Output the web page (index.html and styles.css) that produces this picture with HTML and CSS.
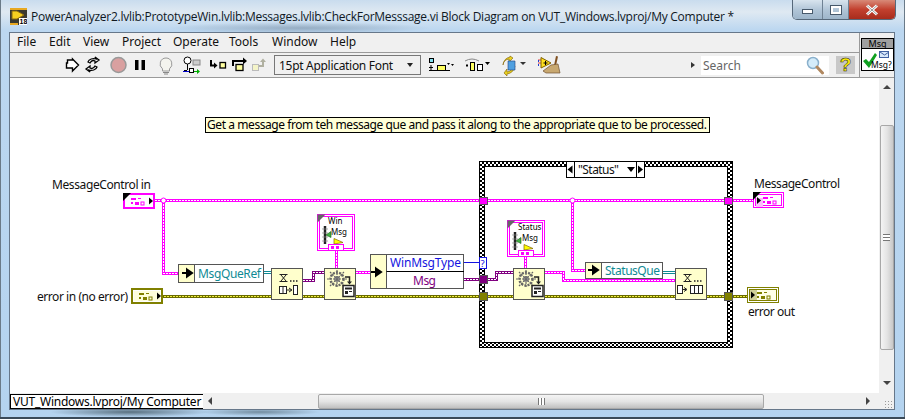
FILE: index.html
```html
<!DOCTYPE html>
<html lang="en">
<head>
  <meta charset="utf-8">
  <meta name="viewport" content="width=device-width, initial-scale=1.0">
  <title>CheckForMesssage.vi Block Diagram</title>
  <link rel="stylesheet" href="styles.css">
</head>
<body>
  <div class="titlebar">
    <svg class="app-icon" width="17" height="17" viewBox="0 0 17 17">
      <rect width="17" height="17" fill="#3a3a30"/>
      <rect x="0" y="0" width="17" height="2" fill="#e8a820"/>
      <rect x="0" y="15" width="8" height="2" fill="#e8a820"/>
      <path d="M2 3h5l7 4-7 4H2z" fill="#f5d020" stroke="#8a6a10"/>
      <rect x="9" y="10" width="8" height="7" fill="#fff"/>
      <text x="9.5" y="16.4" class="icon-num">18</text>
    </svg>
    <span class="title-text">PowerAnalyzer2.lvlib:PrototypeWin.lvlib:Messages.lvlib:CheckForMesssage.vi Block Diagram on VUT_Windows.lvproj/My Computer *</span>
    <div class="win-btns">
      <div class="win-btn btn-min"><i></i></div>
      <div class="win-btn btn-max"><i></i></div>
      <div class="win-btn btn-close">
        <svg width="14" height="12" viewBox="0 0 14 12"><path d="M2 1.5l10 9M12 1.5l-10 9" stroke="#fff" stroke-width="3"/><path d="M2 1.5l10 9M12 1.5l-10 9" stroke="#555" stroke-width=".6"/></svg>
      </div>
    </div>
  </div>

  <div class="window">
    <div class="top">
      <div class="bars">
        <div class="menubar">
          <span class="m-file">File</span>
          <span class="m-edit">Edit</span>
          <span class="m-view">View</span>
          <span class="m-project">Project</span>
          <span class="m-operate">Operate</span>
          <span class="m-tools">Tools</span>
          <span class="m-window">Window</span>
          <span>Help</span>
        </div>
        <div class="toolbar">
          <!-- run / pause / step buttons -->
          <svg class="strip-run" width="210" height="24" viewBox="60 53 210 24">
            <path d="M67.5 60.5v3h-1v5h1v0h5v3l6-6-6-6v1z" transform="translate(0,-.5)" fill="#fff" stroke="#000" stroke-width="1.4"/>
            <path d="M88 62c1-3 5-4 8-3l-1-2 4 3-4 3 0-2c-2-1-4 0-5 2zM97 67c-1 3-5 4-8 3l1 2-4-3 4-3 0 2c2 1 4 0 5-2z" fill="#fff" stroke="#000" stroke-width="1.3"/>
            <circle cx="118.5" cy="65" r="7.5" fill="#d9a0a0" stroke="#999" stroke-width="1.5"/>
            <rect x="135" y="60" width="3.5" height="10" fill="#000"/>
            <rect x="141.5" y="60" width="3.5" height="10" fill="#000"/>
            <path d="M166 58a6 6 0 0 1 3.5 10.800v2.200h-7v-2.200a6 6 0 0 1 3.500-10.800z" fill="#f4f4ee" stroke="#999"/>
            <path d="M163 72.500h6M164 74h4" stroke="#888"/>
            <circle cx="187.500" cy="60.500" r="3.500" fill="#fff" stroke="#000"/>
            <path d="M187.500 64v6M184 70.500h3" stroke="#000"/>
            <rect x="193" y="60" width="7" height="5" fill="#ccc" stroke="#888"/>
            <path d="M183 71.500h7" stroke="#0000d0"/>
            <rect x="189.500" y="68.500" width="4" height="4" fill="#fff" stroke="#000"/>
            <path d="M194 71h3v-2l3 2.500-3 2.500v-2h-3z" fill="#00b000"/>
            <path d="M211 60v5.500h4" fill="none" stroke="#000" stroke-width="2"/>
            <path d="M214 62.500l3.500 3-3.500 3z" fill="#000"/>
            <rect x="220" y="62.500" width="5.500" height="5.500" fill="#ffffa0" stroke="#000" stroke-width="1.300"/>
            <path d="M233 66v-5h11" fill="none" stroke="#000" stroke-width="2"/>
            <path d="M243 57.500l4 3.500-4 3.500z" fill="#000"/>
            <rect x="236" y="64.500" width="7" height="6" fill="#ffffa0" stroke="#000" stroke-width="1.300"/>
            <rect x="252.500" y="64.500" width="6" height="6" fill="#f4f4c8" stroke="#bbb"/>
            <path d="M259 66h4v-5" fill="none" stroke="#b0b0a0" stroke-width="2"/>
            <path d="M260 62l3-3.500 3 3.500z" fill="#b0b0a0"/>
          </svg>
          <div class="font-ring"><span>15pt Application Font</span><i class="caret"></i></div>
          <!-- align / distribute / resize buttons -->
          <svg class="strip-align" width="140" height="24" viewBox="425 53 140 24">
            <rect x="429.500" y="58.500" width="4" height="4" fill="#80e0f0" stroke="#000"/>
            <path d="M429 67.500h4M431 65v5M429 70.500h21" stroke="#000"/>
            <rect x="437.500" y="65.500" width="8" height="5" fill="#ffff60" stroke="#000"/>
            <path d="M447 63l3 0-1.500 2z M451 64h3l-1.500 2z" fill="#000"/>
            <path d="M465 61q7-4 14 0" fill="none" stroke="#888"/>
            <rect x="466" y="64.500" width="2" height="2" fill="#000"/>
            <rect x="470.500" y="62.500" width="4" height="8" fill="#ffff60" stroke="#000"/>
            <rect x="477.500" y="64.500" width="5" height="6" fill="#fff" stroke="#000"/>
            <path d="M485 62h5l-2.500 3z" fill="#000"/>
            <path d="M503 65a7 7 0 0 1 6-6v3l4-4-3-2v1a9 9 0 0 0-7 8z" fill="#e8d020" stroke="#806000" stroke-width=".6"/>
            <path d="M513 66a7 7 0 0 1-6 6v-3l-3 4 3 3v-2a9 9 0 0 0 8-8z" fill="#e8d020" stroke="#806000" stroke-width=".6"/>
            <path d="M508 61h7v9h-7z" fill="#50a0e0" stroke="#204080" stroke-width=".6"/>
            <path d="M520 62h6l-3 3z" fill="#333"/>
            <path d="M538 60h6M538 63h6" stroke="#e04040"/>
            <path d="M538 61h1M538 65h1" stroke="#2040d0" stroke-width="2"/>
            <path d="M541 57.500l10 5.500-10 5z" fill="#ffe020" stroke="#806000"/>
            <path d="M543.500 63h4M545.500 61v4" stroke="#000"/>
            <path d="M556 56l2 .5-2 9h-2z" fill="#805020"/>
            <path d="M543 71l8-6 7-1 2 9-14 0z" fill="#c8a870" stroke="#705030" stroke-width=".7"/>
          </svg>
          <i class="run-arrow"></i>
          <div class="search"><span>Search</span>
            <svg width="18" height="19" viewBox="0 0 18 19">
              <circle cx="7" cy="7" r="5.500" fill="#d4ecfa" stroke="#8ab0cc" stroke-width="1.500"/>
              <path d="M11 11l5.500 6" stroke="#b08860" stroke-width="3" stroke-linecap="round"/>
            </svg>
          </div>
          <div class="help-btn">?</div>
        </div>
      </div>
      <div class="conpane-cell">
        <div class="conpane">
          <div class="con-head">Msg</div>
          <div class="con-body">
            <svg width="30" height="21" viewBox="0 0 30 21">
              <path d="M1 12l3-2 3 3 6-9 2 2-8 13z" fill="#10a020"/>
              <rect x="17.500" y="2.500" width="9" height="6" fill="#d8e8fa" stroke="#4060a0"/>
              <path d="M18 3l4.500 3 4.500-3" fill="none" stroke="#4060a0"/>
              <text x="9" y="19" class="con-text">Msg?</text>
            </svg>
          </div>
        </div>
      </div>
    </div>

    <div class="middle">
      <div class="diagram">
        <svg class="bd" width="869" height="315" viewBox="10 78 869 315">
          <defs>
            <pattern id="checker" width="4" height="4" patternUnits="userSpaceOnUse">
              <rect width="4" height="4" fill="#fff"/>
              <rect width="2" height="2" fill="#000"/>
              <rect x="2" y="2" width="2" height="2" fill="#000"/>
            </pattern>
            <!-- cluster glyph inside control and indicator terminals -->
            <g id="cluster">
              <rect x="0" y="0" width="5" height="2"/>
              <rect x="7" y="0" width="3" height="1"/>
              <rect x="0" y="4" width="2" height="2"/>
              <rect x="4" y="4" width="4" height="3"/>
              <rect x="10" y="4" width="3" height="3" fill="none" stroke="currentColor" stroke-width="1"/>
            </g>
            <g id="sub-arrow"><path d="M0 5h8M5 1.500l5 3.500-5 3.500z" fill="#000" stroke="#000" stroke-width="2"/></g>
            <!-- typedef constant, drawn at 0,0 -->
            <g id="typedef">
              <rect x=".5" y=".5" width="37" height="36" fill="#fff" stroke="#f0f"/>
              <rect x="2.500" y="2.500" width="33" height="32" fill="#fff" stroke="#f0f"/>
              <path d="M.5 .5h8l-8 8z" fill="#666"/>
              <path d="M6 12h4v18H6z" fill="#ccc"/>
              <path d="M7 12h2v18H7z" fill="#222"/>
              <path d="M5 15h6M5 19h6M5 23h6M5 27h6" stroke="#888" stroke-width=".7"/>
              <path d="M9 21l5-3.500v6z" fill="#40b040" stroke="#106010" stroke-width=".6"/>
              <path d="M17 24.500l9 4-9 1.500z" fill="#ff0" stroke="#806000" stroke-width=".7"/>
              <path d="M13 31h8" stroke="#e02020"/>
              <rect x="11.500" y="30.500" width="15" height="6" fill="#fff" stroke="#f0f"/>
              <rect x="14" y="32" width="3" height="3" fill="#f0f"/>
              <rect x="19" y="32" width="3" height="3" fill="#f0f"/>
            </g>
            <!-- dequeue and enqueue nodes -->
            <g id="hourglass">
              <path d="M8.500 6.500h8M8.500 13.500h8M10 7l5 6M15 7l-5 6" stroke="#222" fill="none"/>
              <path d="M19 13h1.500M22 13h1.500M25 13h1.500" stroke="#222" stroke-width="1.500"/>
            </g>
            <g id="gear-node">
              <rect x=".5" y=".5" width="31" height="31" fill="#ffffcc" stroke="#555"/>
              <circle cx="13" cy="11" r="6.500" fill="none" stroke="#666" stroke-width="2.500" stroke-dasharray="2 1.200"/>
              <circle cx="13" cy="11" r="3" fill="#888"/>
              <path d="M3 11h20M13 2v18M6 4l14 14M20 4L6 18" stroke="#666" stroke-width="1.200" stroke-dasharray="2 1"/>
              <path d="M21 9h4.500v5" fill="none" stroke="#222" stroke-width="1.500"/>
              <path d="M23 13.500h5l-2.500 3z" fill="#222"/>
              <rect x="19" y="17.500" width="11" height="11" fill="#fff" stroke="#222" stroke-width="1.500"/>
              <rect x="21" y="19.500" width="7" height="2" fill="#222"/>
              <rect x="21" y="23" width="3" height="3" fill="#222"/>
              <rect x="25" y="23" width="3" height="1" fill="#222"/>
            </g>
          </defs>

          <!-- wires run below the structure and nodes -->
          <g class="wires">
            <path class="w pink" d="M155 200.500H753M163.500 200.500V273.500H178M572.500 200.500V270.500H585M336.500 251V268M525.500 257V268M356 272.500H370M545 272.500H563.500V280.500H675"/>
            <path class="d white" d="M155 200.500H753M163.500 200.500V273.500H178M572.500 200.500V270.500H585M336.500 251V268M525.500 257V268M356 272.500H370M545 272.500H563.500V280.500H675"/>
            <path class="w purple" d="M303 280.500H313.500V272.500H324M464 279.500H480M488 279.500H496.500V272.500H513"/>
            <path class="d white" d="M303 280.500H313.500V272.500H324M464 279.500H480M488 279.500H496.500V272.500H513"/>
            <path class="w olive" d="M161 296.500H748"/>
            <path class="d yellow" d="M161 296.500H748"/>
            <path class="w teal" d="M264 272.500H271M663 272.500H675"/>
            <path class="thin-white" d="M264 272.500H271M663 272.500H675"/>
            <path class="blue" d="M464 262.500H480"/>
          </g>
          <circle cx="163.500" cy="200.500" r="2.500" fill="#fff" stroke="#f0f"/>
          <circle cx="572.500" cy="200.500" r="2.500" fill="#fff" stroke="#f0f"/>

          <!-- comment -->
          <rect x="205.500" y="117.500" width="504" height="15" class="comment-box"/>
          <text x="207" y="129" class="lbl comment" textLength="500">Get a message from teh message que and pass it along to the appropriate que to be processed.</text>

          <!-- front panel terminals -->
          <text x="52" y="189" class="lbl" textLength="99">MessageControl in</text>
          <g transform="translate(123,193)">
            <rect x="1" y="1" width="30" height="14" fill="#fff" stroke="#f0f" stroke-width="2"/>
            <path d="M0 0h8l-8 8z" fill="#000"/>
            <use href="#cluster" x="8" y="5" fill="#f0f" color="#f0f"/>
            <path d="M26 4.500l4 3.500-4 3.500z" fill="#000"/>
          </g>
          <text x="37" y="301" class="lbl" textLength="91">error in (no error)</text>
          <g transform="translate(131,288)">
            <rect x="1" y="1" width="30" height="14" fill="#fff" stroke="#808000" stroke-width="2"/>
            <rect x="3" y="3" width="26" height="10" fill="#ffffdc"/>
            <use href="#cluster" x="8" y="5" fill="#808000" color="#808000"/>
            <path d="M26 4.500l4 3.500-4 3.500z" fill="#000"/>
          </g>
          <text x="754" y="188" class="lbl" textLength="86">MessageControl</text>
          <g transform="translate(753,192)">
            <rect x=".5" y=".5" width="30" height="15" fill="#fff" stroke="#f0f"/>
            <rect x="2.500" y="2.500" width="26" height="11" fill="#fff" stroke="#f0f"/>
            <path d="M0 0h8l-8 8z" fill="#000"/>
            <rect x="3" y="6" width="7" height="9" fill="#fbc0fb"/>
            <use href="#cluster" x="10" y="5" fill="#f0f" color="#f0f"/>
            <path d="M4 5l4 3.500-4 3.500z" fill="#000"/>
          </g>
          <g transform="translate(747,287)">
            <rect x=".5" y=".5" width="31" height="15" fill="#fff" stroke="#808000"/>
            <rect x="2.500" y="2.500" width="27" height="11" fill="#ffffe8" stroke="#808000"/>
            <rect x="3" y="3" width="7" height="10" fill="#cfcf9a"/>
            <use href="#cluster" x="10" y="5" fill="#808000" color="#808000"/>
            <path d="M4 4.500l4 3.500-4 3.500z" fill="#000"/>
          </g>
          <text x="748" y="316" class="lbl" textLength="47">error out</text>

          <!-- unbundle MsgQueRef -->
          <rect x="178.500" y="264.500" width="85" height="18" class="node-white"/>
          <rect x="178.500" y="264.500" width="16" height="18" class="node-beige"/>
          <use href="#sub-arrow" x="182" y="268"/>
          <text x="198" y="278" class="lbl teal-text" textLength="63">MsgQueRef</text>

          <!-- dequeue -->
          <g transform="translate(271,268)">
            <rect x=".5" y=".5" width="31" height="31" fill="#ffffcc" stroke="#555"/>
            <use href="#hourglass"/>
            <rect x="8.500" y="18.500" width="7" height="7" fill="#fff" stroke="#222"/>
            <path d="M12 18.500v7" stroke="#222"/>
            <path d="M16 22h4M18 20l3 2-3 2" fill="none" stroke="#222"/>
            <rect x="22.500" y="17.500" width="4" height="9" fill="#fff" stroke="#222"/>
          </g>

          <use href="#gear-node" x="324" y="268"/>
          <use href="#typedef" x="317" y="214"/>
          <text x="328" y="224" class="small">Win</text>
          <text x="331" y="235" class="small">Msg</text>

          <!-- unbundle WinMsgType / Msg -->
          <rect x="370.500" y="254.500" width="93" height="34" class="node-white"/>
          <rect x="370.500" y="254.500" width="16" height="34" class="node-beige"/>
          <path d="M386.500 271.500H464" stroke="#000"/>
          <use href="#sub-arrow" x="371" y="267"/>
          <text x="390" y="267" class="lbl blue-text" textLength="71">WinMsgType</text>
          <text x="413" y="285" class="lbl purple-text" textLength="23">Msg</text>

          <!-- case structure -->
          <rect x="482" y="164" width="248" height="181" class="case" />
          <rect x="479.500" y="161.500" width="253" height="186" class="case-line"/>
          <rect x="484.500" y="166.500" width="243" height="176" class="case-line"/>
          <rect x="566.500" y="161.500" width="78" height="16" class="sel"/>
          <path d="M574.500 161.500v16M636.500 161.500v16" stroke="#000"/>
          <path d="M572.500 165.500v8l-5-4zM638 165.500v8l5-4z" fill="#000"/>
          <text x="578" y="174" class="lbl" textLength="41">"Status"</text>
          <path d="M627 167h8l-4 5z" fill="#000"/>

          <!-- case tunnels -->
          <rect x="479.500" y="197.500" width="8" height="7" class="tun" fill="#f0f"/>
          <rect x="724.500" y="197.500" width="8" height="7" class="tun" fill="#f0f"/>
          <rect x="479.500" y="275.500" width="8" height="8" class="tun" fill="#800080"/>
          <rect x="479.500" y="292.500" width="8" height="8" class="tun" fill="#808000"/>
          <rect x="724.500" y="292.500" width="8" height="8" class="tun" fill="#808000"/>
          <rect x="479.500" y="257.500" width="7" height="11" class="sel-term"/>
          <text x="480.500" y="266.500" class="q-mark">?</text>

          <use href="#typedef" x="507" y="220"/>
          <text x="518" y="230" class="small">Status</text>
          <text x="522" y="241" class="small">Msg</text>
          <use href="#gear-node" x="513" y="268"/>

          <!-- unbundle StatusQue -->
          <rect x="585.500" y="262.500" width="77" height="16" class="node-white"/>
          <rect x="585.500" y="262.500" width="16" height="16" class="node-beige"/>
          <use href="#sub-arrow" x="588" y="265"/>
          <text x="605" y="275" class="lbl teal-text" textLength="55">StatusQue</text>

          <!-- enqueue -->
          <g transform="translate(675,268)">
            <rect x=".5" y=".5" width="31" height="31" fill="#ffffcc" stroke="#555"/>
            <use href="#hourglass"/>
            <rect x="2.500" y="17.500" width="5" height="8" fill="#fff" stroke="#222"/>
            <path d="M8 21.500h3M9 19.500l3 2-3 2" fill="none" stroke="#222"/>
            <rect x="15.500" y="17.500" width="12" height="8" fill="#fff" stroke="#222"/>
            <path d="M19.500 17.500v8M23.500 17.500v8" stroke="#222"/>
          </g>
        </svg>
      </div>
      <div class="vscroll">
        <i class="arrow-up"></i>
        <div class="vthumb"><b></b></div>
        <i class="arrow-down"></i>
      </div>
    </div>

    <div class="bottom">
      <div class="context">VUT_Windows.lvproj/My Computer</div>
      <i class="arrow-left"></i>
      <div class="hthumb"><b></b></div>
      <i class="arrow-right"></i>
      <div class="grip"></div>
    </div>
  </div>
</body>
</html>
```

FILE: styles.css
```css
html, body { margin: 0; padding: 0; }
body {
  width: 905px; height: 419px;
  overflow: hidden;
  box-sizing: border-box;
  padding: 0 10px 0 9px;
  font-family: "Noto Sans", sans-serif;
  background:
    radial-gradient(ellipse 130px 6px at 300px 28px, rgba(70,90,110,.35), transparent),
    radial-gradient(ellipse 80px 5px at 130px 412px, rgba(50,70,80,.7), transparent),
    radial-gradient(ellipse 60px 4px at 260px 412px, rgba(50,70,80,.5), transparent),
    linear-gradient(180deg, #c9dcee 0, #dfe9f2 12px, #bcd7f0 30px, #b4d3ef 100%);
  box-shadow: inset 0 -2px 0 #3a4a58, inset 1px 0 0 #6a7a88, inset -1px 0 0 #6a7a88;
}

/* Title bar */
.titlebar {
  height: 32px;
  display: flex;
  color: #10181f;
}
.app-icon { margin: 8px 0 0 1px; }
.icon-num { font: bold 7px "Liberation Sans", sans-serif; fill: #000; }
.title-text {
  margin: 8px 0 0 4px;
  font: 12px/17px "Open Sans", sans-serif;
  letter-spacing: -.26px;
  white-space: nowrap;
  flex: none;
}
.win-btns {
  margin-left: auto;
  display: flex;
  height: 20px;
  margin-right: -1px;
  border: 1px solid #56687a;
  border-top: none;
  border-radius: 0 0 5px 5px;
  overflow: hidden;
  box-sizing: border-box;
}
.win-btn {
  display: flex; align-items: center; justify-content: center;
  background: linear-gradient(180deg, #d8e4ee, #b2c6d8 50%, #9db5ca);
  border-right: 1px solid #6f8294;
}
.btn-min { width: 29px; }
.btn-max { width: 25px; }
.btn-close {
  width: 46px; border: none;
  background: linear-gradient(180deg, #d88a78, #c2402e 50%, #a82c1c);
}
.btn-min i { width: 9px; height: 3px; margin-top: 4px; background: #fff; border: 1px solid #47596b; }
.btn-max i { width: 6px; height: 4px; border: 2px solid #fff; outline: 1px solid #47596b; }

/* Window body */
.window {
  height: 376px;
  background: #f0f0f0;
  border: 1px solid #66778a;
  display: flex; flex-direction: column;
}
.top { display: flex; height: 44px; flex: none; border-bottom: 1px solid #9a9a9a; }
.bars { width: 850px; }
.menubar {
  height: 19px;
  border-bottom: 1px solid #9a9a9a;
  display: flex;
  padding-left: 7px;
  font: 12px/17px "Noto Sans", sans-serif;
  color: #111;
}
.m-file { width: 32px; }
.m-edit { width: 34px; }
.m-view { width: 39px; }
.m-project { width: 51px; }
.m-operate { width: 56px; }
.m-tools { width: 43px; }
.m-window { width: 58px; }

.toolbar { height: 24px; display: flex; align-items: center; }
.strip-run { margin-left: 50px; flex: none; }
.font-ring {
  box-sizing: border-box;
  width: 147px; height: 20px;
  margin-left: 4px;
  padding-left: 4px;
  display: flex; align-items: center; justify-content: space-between;
  border: 1px solid #777;
  font: 12px "Noto Sans", sans-serif;
  letter-spacing: -.3px;
  color: #111;
}
.caret {
  width: 0; height: 0; margin-right: 7px;
  border: 3px solid transparent; border-top: 4px solid #222; border-bottom: none;
}
.strip-align { margin-left: 4px; flex: none; }
.run-arrow {
  width: 0; height: 0;
  margin-left: 126px;
  border: 3px solid transparent; border-left: 4px solid #333; border-right: none;
}
.search {
  box-sizing: border-box;
  width: 128px; height: 19px;
  margin-left: 6px;
  padding: 0 5px 0 2px;
  background: #fff;
  display: flex; align-items: center; justify-content: space-between;
  font: 12px "Noto Sans", sans-serif;
  color: #666;
}
.help-btn {
  width: 19px; height: 18px;
  margin-left: 7px;
  background: #c8c8c8;
  text-align: center;
  font: bold 19px/18px "Liberation Sans", sans-serif;
  color: #ffee00;
  -webkit-text-stroke: .5px #222;
}
.conpane-cell { flex: 1; border-left: 1px solid #9a9a9a; padding: 5px 0 0 1px; }
.conpane {
  width: 31px; height: 31px;
  border: 1px solid #000;
  background: #fff;
}
.con-head {
  height: 9px;
  background: #a0a0a0;
  border-bottom: 1px solid #000;
  text-align: center;
  font: 9px/9px "Noto Sans", sans-serif;
  color: #000;
}
.con-body svg { display: block; }
.con-text { font: 8.5px "Noto Sans", sans-serif; fill: #000; }

/* Block diagram */
.middle { height: 315px; flex: none; display: flex; background: #fff; }
.diagram { width: 869px; overflow: hidden; }
.bd { display: block; }
.lbl { font: 12px "Noto Sans", sans-serif; fill: #111; }
.comment { fill: #000; }
.comment-box { fill: #ffffd8; stroke: #000; }
.small { font: 8px "Noto Sans", sans-serif; fill: #000; }
.teal-text { fill: #0f8a94; }
.blue-text { fill: #1414e0; }
.purple-text { fill: #800080; }
.q-mark { font: 9.5px "Noto Sans", sans-serif; fill: #1414e0; }
.node-white { fill: #fff; stroke: #555; }
.node-beige { fill: #ffffcc; stroke: #555; }
.sel { fill: #fff; stroke: #000; }
.sel-term { fill: #fff; stroke: #1414e0; }
.case { fill: none; stroke: url(#checker); stroke-width: 5; shape-rendering: crispEdges; }
.case-line { fill: none; stroke: #000; shape-rendering: crispEdges; }
.tun { stroke: #555; }
.wires path { fill: none; shape-rendering: crispEdges; }
.w { stroke-width: 3; }
.d { stroke-width: 1; stroke-dasharray: 2 1; }
.pink { stroke: #f0f; }
.purple { stroke: #800080; }
.olive { stroke: #6b6b00; }
.teal { stroke: #0f8a94; }
.white { stroke: #fff; }
.yellow { stroke: #f0f040; }
.thin-white { stroke: #fff; stroke-width: 1; }
.blue { stroke: #1414e0; stroke-width: 1; }

/* Scroll bars */
.vscroll {
  flex: 1;
  display: flex; flex-direction: column; align-items: center;
  background: #f0f0f0;
}
.arrow-up {
  width: 0; height: 0; margin-top: 7px;
  border: 4px solid transparent; border-bottom: 4px solid #444; border-top: none;
}
.vthumb {
  box-sizing: border-box;
  width: 14px; height: 225px; margin-top: 36px;
  border: 1px solid #a8a8a8;
  border-radius: 2px;
  background: linear-gradient(90deg, #f4f4f4, #e4e4e4 50%, #c8c8c8);
  display: flex; align-items: center; justify-content: center;
}
.vthumb b { width: 7px; height: 5px; border-top: 1px solid #777; border-bottom: 1px solid #777; background: linear-gradient(#fff 40%, #777 40%, #777 60%, #fff 60%); }
.arrow-down {
  width: 0; height: 0; margin-top: 31px;
  border: 4px solid transparent; border-top: 4px solid #444; border-bottom: none;
}
.bottom {
  flex: 1;
  display: flex; align-items: center;
}
.context {
  box-sizing: border-box;
  width: 193px; height: 15px;
  background: #fff;
  border: 1px solid #000;
  border-right: none;
  padding-left: 2px;
  font: 12px/13px "Noto Sans", sans-serif;
  letter-spacing: -.25px;
  white-space: nowrap;
  color: #000;
}
.arrow-left {
  width: 0; height: 0; margin-left: 5px;
  border: 4px solid transparent; border-right: 4px solid #444; border-left: none;
}
.hthumb {
  box-sizing: border-box;
  width: 446px; height: 15px; margin-left: 106px;
  border: 1px solid #a8a8a8;
  border-radius: 2px;
  background: linear-gradient(180deg, #f4f4f4, #e4e4e4 50%, #c0c0c0);
  display: flex; align-items: center; justify-content: center;
}
.hthumb b { width: 5px; height: 7px; border-left: 1px solid #777; border-right: 1px solid #777; background: linear-gradient(90deg, #fff 40%, #777 40%, #777 60%, #fff 60%); }
.arrow-right {
  width: 0; height: 0; margin-left: 102px;
  border: 4px solid transparent; border-left: 4px solid #444; border-right: none;
}
.grip {
  width: 8px; height: 8px; margin: 5px 2px 0 auto;
  background: radial-gradient(circle, #999 1px, transparent 1px) 0 0 / 3px 3px;
}
```
